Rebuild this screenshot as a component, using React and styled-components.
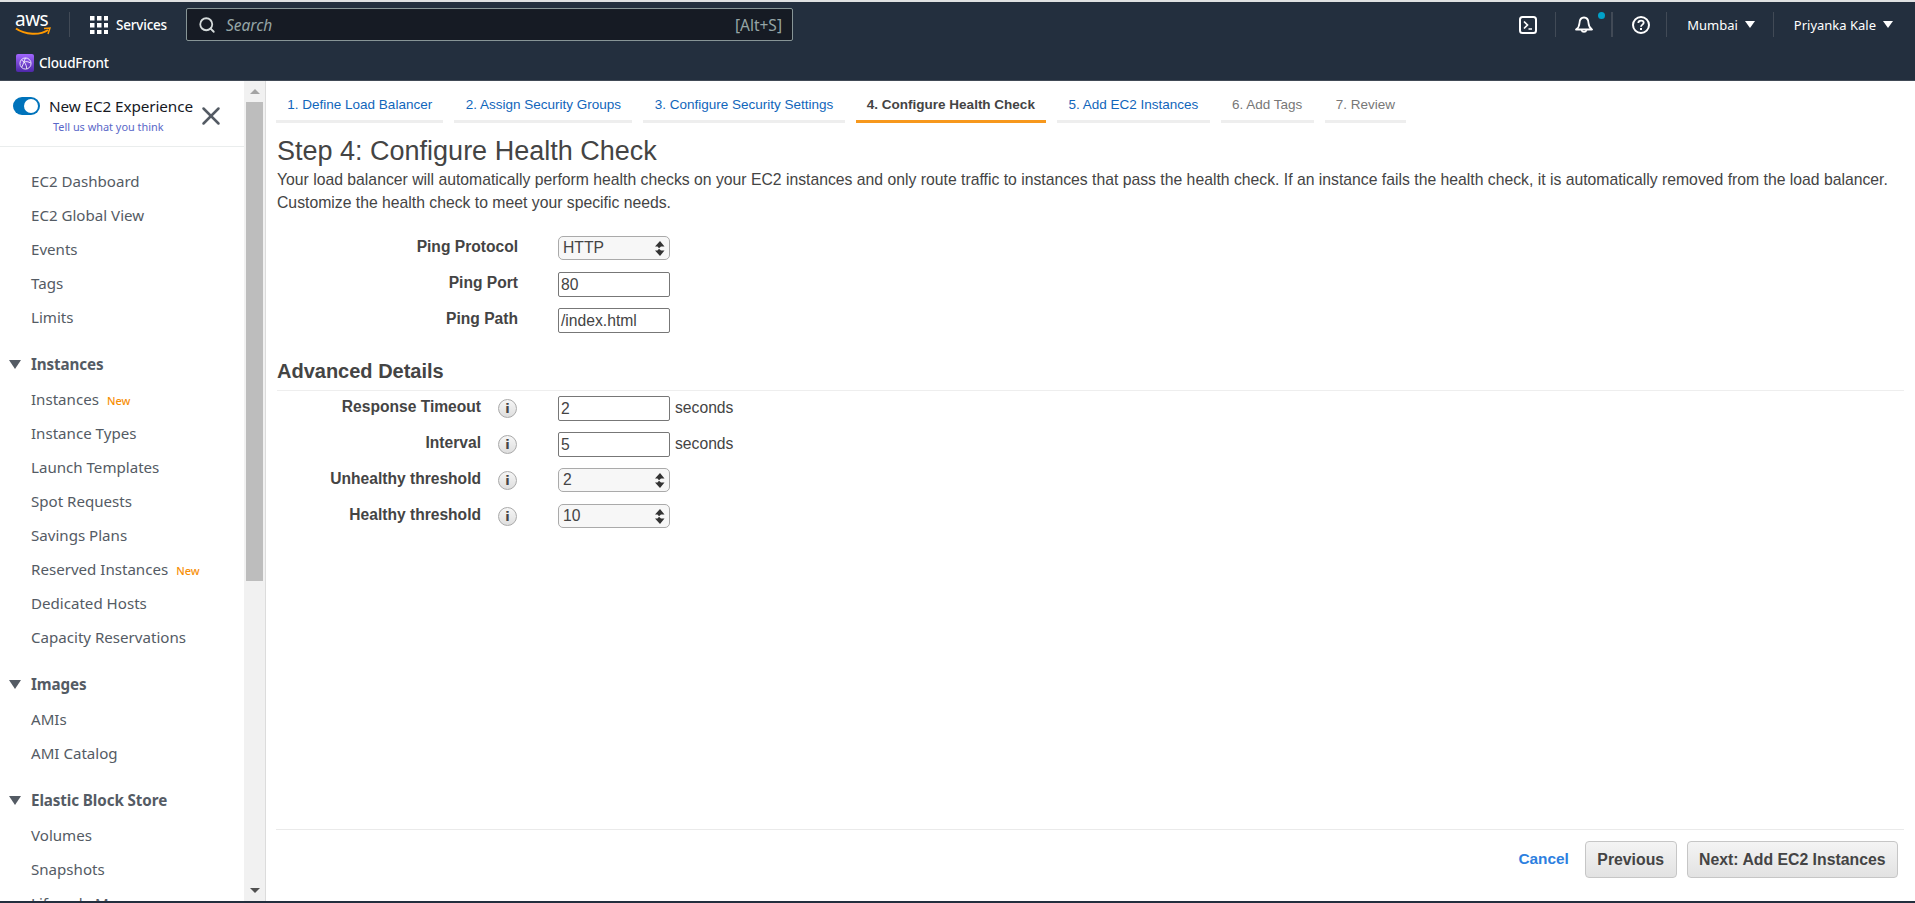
import styled, { createGlobalStyle } from "styled-components";
import { X, Search } from "lucide-react";

const GlobalStyle = createGlobalStyle`
  html, body {
    margin: 0;
    padding: 0;
    height: 100%;
    overflow: hidden;
    background: #fff;
  }
  * { box-sizing: border-box; }
`;

const Page = styled.div`
  height: 903px;
  display: flex;
  flex-direction: column;
  border-top: 2px solid #dfe1e2;
  border-bottom: 2px solid #232f3e;
  font-family: "Liberation Sans", Arial, sans-serif;
`;

/* top bar */
const Header = styled.header`
  flex: none;
  height: 79px;
  background: #232f3e;
  color: #fff;
  font-family: "Noto Sans", sans-serif;
  font-size: 14px;
  border-bottom: 1px solid #414a56;
`;

const TopRow = styled.div`
  height: 45px;
  display: flex;
  align-items: center;
  padding-left: 15px;
`;

const Logo = styled.div`
  width: 36px;
  height: 30px;
  position: relative;
  font-size: 19px;
  line-height: 19px;
  letter-spacing: -0.5px;
  margin-right: 18px;
  svg {
    position: absolute;
    left: 0;
    top: 17px;
  }
`;

const VDivider = styled.div`
  width: 1px;
  height: 25px;
  background: #414a56;
  margin-right: 20px;
`;

const Services = styled.div`
  display: flex;
  align-items: center;
  gap: 8px;
  font-weight: 500;
  font-size: 13.5px;
  letter-spacing: -0.2px;
  margin-right: 19px;
`;

const SearchBox = styled.div`
  width: 607px;
  height: 33px;
  background: #161b24;
  border: 1px solid #879596;
  border-radius: 2px;
  display: flex;
  align-items: center;
  padding: 0 10px 0 11px;
  gap: 10px;
  font-size: 15.5px;
  color: #95a5a6;
  svg { color: #d5dbdb; }
`;

const SearchHint = styled.span`
  font-style: italic;
  flex: 1;
`;

const TopRight = styled.div`
  margin-left: auto;
  display: flex;
  align-items: center;
`;

const NavCell = styled.div`
  height: 25px;
  display: flex;
  align-items: center;
  gap: 7px;
  position: relative;
  padding: ${(p) => p.$pad};
  border-left: ${(p) => (p.$first ? "none" : `${p.$thick ? 2 : 1}px solid #414a56`)};
  font-size: 13px;
`;

const NotifyDot = styled.span`
  position: absolute;
  width: 7px;
  height: 7px;
  border-radius: 50%;
  background: #00a1c9;
  top: 0;
  right: 6px;
`;

const Caret = styled.span`
  width: 0;
  height: 0;
  border-left: 5px solid transparent;
  border-right: 5px solid transparent;
  border-top: 7px solid #fff;
`;

const SubRow = styled.div`
  height: 33px;
  display: flex;
  align-items: center;
  padding: 0 0 1px 16px;
  gap: 5px;
  font-size: 13.5px;
  letter-spacing: -0.2px;
  font-weight: 500;
`;

const ServiceBadge = styled.span`
  width: 18px;
  height: 18px;
  border-radius: 2px;
  background: linear-gradient(0deg, #4d27a8, #a166ff);
  display: flex;
  align-items: center;
  justify-content: center;
`;

/* body */
const Body = styled.div`
  flex: 1;
  min-height: 0;
  display: flex;
`;

const Sidebar = styled.aside`
  flex: none;
  width: 244px;
  display: flex;
  flex-direction: column;
  font-family: "Noto Sans", sans-serif;
  overflow: hidden;
`;

const SideHead = styled.div`
  flex: none;
  height: 66px;
  border-bottom: 1px solid #eaeded;
  display: flex;
  padding: 16px 0 0 13px;
  position: relative;
`;

const Toggle = styled.span`
  width: 27px;
  height: 18px;
  border-radius: 9px;
  background: #0073bb;
  position: relative;
  margin-right: 9px;
  &::after {
    content: "";
    position: absolute;
    right: 2px;
    top: 2px;
    width: 14px;
    height: 14px;
    border-radius: 50%;
    background: #fff;
  }
`;

const ExpTitle = styled.div`
  font-size: 15.3px;
  line-height: 19px;
  color: #16191f;
  letter-spacing: -0.1px;
  white-space: nowrap;
`;

const ExpLink = styled.div`
  font-size: 10.9px;
  line-height: 14px;
  color: #5a67c8;
  margin-top: 4px;
  padding-left: 4px;
`;

const CloseBtn = styled.span`
  position: absolute;
  left: 196px;
  top: 20px;
  color: #545b64;
  display: flex;
`;

const Nav = styled.nav`
  padding-top: 17px;
`;

const NavItem = styled.div`
  height: 34px;
  display: flex;
  align-items: center;
  padding-left: 31px;
  font-size: 15.1px;
  color: #545b64;
  white-space: nowrap;
`;

const NewTag = styled.span`
  color: #f79008;
  font-size: 11px;
  font-weight: 500;
  margin-left: 8px;
  padding-top: 2px;
`;

const SectionHead = styled.div`
  height: 36px;
  margin-top: 12px;
  display: flex;
  align-items: center;
  padding-left: 9px;
  gap: 10px;
  font-size: 15.2px;
  font-weight: 700;
  color: #545b64;
  letter-spacing: -0.1px;
`;

const SectionCaret = styled.span`
  width: 0;
  height: 0;
  border-left: 6px solid transparent;
  border-right: 6px solid transparent;
  border-top: 9px solid #545b64;
`;

/* fake scrollbar as in the shot */
const ScrollTrack = styled.div`
  flex: none;
  width: 22px;
  background: #f1f1f1;
  border-right: 1px solid #dcdcdc;
  padding-right: 2px;
  display: flex;
  flex-direction: column;
  align-items: flex-end;
`;

const ScrollBtn = styled.div`
  width: 17px;
  height: 21px;
  display: flex;
  align-items: center;
  justify-content: center;
  &::after {
    content: "";
    border-left: 5px solid transparent;
    border-right: 5px solid transparent;
    ${(p) => (p.$down ? "border-top: 5px solid #505050;" : "border-bottom: 5px solid #a3a3a3;")}
  }
`;

const ScrollThumb = styled.div`
  width: 17px;
  height: 479px;
  background: #bdbdbd;
`;

const ScrollSpace = styled.div`
  flex: 1;
`;

const Main = styled.main`
  flex: 1;
  min-width: 0;
  display: flex;
  flex-direction: column;
  padding: 0 11px 0 10px;
  color: #444;
  font-size: 14px;
`;

const Tabs = styled.div`
  flex: none;
  display: flex;
  gap: 11px;
  height: 42px;
`;

const Tab = styled.div`
  padding: 7px 11.3px 0;
  display: flex;
  align-items: center;
  font-size: 13.5px;
  color: ${(p) => (p.$active ? "#444" : p.$off ? "#777" : "#1166bb")};
  font-weight: ${(p) => (p.$active ? 700 : 400)};
  border-bottom: 3px solid ${(p) => (p.$active ? "#f7981d" : "#eee")};
  white-space: nowrap;
`;

const Title = styled.h1`
  margin: 13px 0 0 1px;
  font-size: 27px;
  line-height: 30px;
  font-weight: 400;
  color: #444;
`;

const Intro = styled.p`
  margin: 2px 0 0 1px;
  font-size: 15.76px;
  line-height: 23px;
  color: #444;
`;

const FieldRow = styled.div`
  height: 36px;
  display: flex;
  align-items: center;
`;

const FieldLabel = styled.label`
  width: ${(p) => (p.$short ? 205 : 242)}px;
  flex: none;
  text-align: right;
  font-weight: 700;
  font-size: 15.6px;
  margin-right: ${(p) => (p.$short ? 0 : 40)}px;
  padding-bottom: 2px;
`;

const InfoIcon = styled.span`
  width: 19px;
  height: 19px;
  margin: 0 41px 0 17px;
  border-radius: 50%;
  background: linear-gradient(#f6f6f6, #dedede);
  border: 1px solid #aaa;
  color: #444;
  font-size: 13px;
  font-weight: 700;
  font-family: "DejaVu Sans", sans-serif;
  display: flex;
  align-items: center;
  justify-content: center;
`;

const TextBox = styled.div`
  width: 112px;
  height: 25px;
  border: 1px solid #777;
  border-radius: 2px;
  padding-left: 2px;
  font-size: 15.7px;
  line-height: 23px;
  color: #444;
  background: #fff;
`;

const SelectBox = styled.div`
  width: 112px;
  height: 24px;
  border: 1px solid #aaa;
  border-radius: 5px;
  padding: 0 4px 0 4px;
  font-size: 15.7px;
  color: #444;
  background: #f7f7f7;
  display: flex;
  align-items: center;
  justify-content: space-between;
`;

const Unit = styled.span`
  margin-left: 5px;
  font-size: 15.7px;
`;

const Fields = styled.div`
  margin-top: ${(p) => p.$top}px;
`;

const SubHeading = styled.h2`
  margin: 20px 0 0 1px;
  padding-bottom: 6px;
  font-size: 20px;
  line-height: 26px;
  font-weight: 700;
  color: #444;
  border-bottom: 1px solid #eee;
`;

const Footer = styled.div`
  margin-top: auto;
  flex: none;
  height: 72px;
  border-top: 1px solid #eaeaea;
  display: flex;
  align-items: flex-start;
  justify-content: flex-end;
  padding: 11px 6px 0 0;
`;

const CancelLink = styled.a`
  color: #2d7fe0;
  font-weight: 700;
  font-size: 15.4px;
  line-height: 36px;
  margin-right: 16px;
`;

const Button = styled.button`
  height: 37px;
  padding: 0 11.5px;
  margin-left: ${(p) => (p.$next ? 10 : 0)}px;
  border: 1px solid #c6c6c6;
  border-radius: 4px;
  background: linear-gradient(#f4f4f4, #e2e2e2);
  color: #444;
  font-family: inherit;
  font-size: 15.8px;
  font-weight: 700;
`;

const SelectArrows = () => (
  <svg width="11" height="15" viewBox="0 0 11 15">
    <path d="M6 0 L10.5 5.5 H7 L5 7.3 L3.5 5.5 H1Z" fill="#333" />
    <path d="M6 15 L10.5 9.5 H7 L5 7.7 L3.5 9.5 H1Z" fill="#333" />
  </svg>
);

const GridIcon = () => (
  <svg width="18" height="18" viewBox="0 0 18 18" fill="#fff">
    {[0, 7, 14].map((y) =>
      [0, 7, 14].map((x) => <rect key={`${x}-${y}`} x={x} y={y} width="4.5" height="4.5" />)
    )}
  </svg>
);

const TerminalIcon = () => (
  <svg width="18" height="18" viewBox="0 0 18 18" fill="none" stroke="#fff" strokeWidth="2">
    <rect x="1" y="1" width="16" height="16" rx="2.5" />
    <path d="M5 5.5 L8.5 9 L5 12.5 M9.5 13 H13" strokeWidth="1.7" />
  </svg>
);

const BellIcon = () => (
  <svg width="18" height="18" viewBox="0 0 18 18" fill="none" stroke="#fff" strokeWidth="1.8">
    <path d="M1 13.5 C3.5 12 4.3 10 4.5 7 C4.7 3.5 6.5 1.5 9 1.5 C11.5 1.5 13.3 3.5 13.5 7 C13.7 10 14.5 12 17 13.5Z" strokeLinejoin="round" />
    <path d="M6.5 14 A2.6 2.6 0 0 0 11.5 14" />
  </svg>
);

const HelpIcon = () => (
  <svg width="18" height="18" viewBox="0 0 18 18" fill="none" stroke="#fff" strokeWidth="2">
    <circle cx="9" cy="9" r="8" />
    <path d="M6.3 7 C6.4 5.2 7.6 4.6 9 4.6 C10.6 4.6 11.7 5.5 11.7 6.8 C11.7 8.6 9 8.7 9 10.8" strokeWidth="1.8" />
    <rect x="8" y="12" width="2" height="2" fill="#fff" stroke="none" />
  </svg>
);

const CloudFrontIcon = () => (
  <svg width="13" height="13" viewBox="0 0 14 14" fill="none" stroke="#fff" strokeWidth="0.9">
    <circle cx="7" cy="7" r="6" />
    <path d="M3 3.5 C6 5 8 8 8.5 13 M7 1 C5.5 4 5 7 3 11 M5.5 5.5 C8 4.5 10 5 12.5 6.5" />
  </svg>
);

const topItems = ["EC2 Dashboard", "EC2 Global View", "Events", "Tags", "Limits"];

const navSections = [
  {
    title: "Instances",
    items: [
      { name: "Instances", isNew: true },
      { name: "Instance Types" },
      { name: "Launch Templates" },
      { name: "Spot Requests" },
      { name: "Savings Plans" },
      { name: "Reserved Instances", isNew: true },
      { name: "Dedicated Hosts" },
      { name: "Capacity Reservations" },
    ],
  },
  { title: "Images", items: [{ name: "AMIs" }, { name: "AMI Catalog" }] },
  {
    title: "Elastic Block Store",
    items: [{ name: "Volumes" }, { name: "Snapshots" }, { name: "Lifecycle Manager" }],
  },
];

const steps = [
  { label: "1. Define Load Balancer" },
  { label: "2. Assign Security Groups" },
  { label: "3. Configure Security Settings" },
  { label: "4. Configure Health Check", active: true },
  { label: "5. Add EC2 Instances" },
  { label: "6. Add Tags", off: true },
  { label: "7. Review", off: true },
];

const App = () => {
  return (
    <Page>
      <GlobalStyle />
      <Header>
        <TopRow>
          <Logo>
            aws
            <svg width="36" height="10" viewBox="0 0 36 10" fill="none">
              <path d="M1 1.5 C10 8 25 8.5 33 3" stroke="#f90" strokeWidth="2" />
              <path d="M29 1.5 L35 1 L33 7" stroke="#f90" strokeWidth="1.5" />
            </svg>
          </Logo>
          <VDivider />
          <Services>
            <GridIcon />
            Services
          </Services>
          <SearchBox>
            <Search size={18} strokeWidth={2.4} />
            <SearchHint>Search</SearchHint>
            <span>[Alt+S]</span>
          </SearchBox>
          <TopRight>
            <NavCell $first $pad="0 18px 0 0">
              <TerminalIcon />
            </NavCell>
            <NavCell $pad="0 18px 0 19px">
              <BellIcon />
              <NotifyDot />
            </NavCell>
            <NavCell $thick $pad="0 16px 0 19px">
              <HelpIcon />
            </NavCell>
            <NavCell $pad="0 18px 0 20px">
              Mumbai <Caret />
            </NavCell>
            <NavCell $pad="0 22px 0 20px">
              Priyanka Kale <Caret />
            </NavCell>
          </TopRight>
        </TopRow>
        <SubRow>
          <ServiceBadge>
            <CloudFrontIcon />
          </ServiceBadge>
          CloudFront
        </SubRow>
      </Header>
      <Body>
        <Sidebar>
          <SideHead>
            <Toggle />
            <div>
              <ExpTitle>New EC2 Experience</ExpTitle>
              <ExpLink>Tell us what you think</ExpLink>
            </div>
            <CloseBtn>
              <X size={30} strokeWidth={2} />
            </CloseBtn>
          </SideHead>
          <Nav>
            {topItems.map((name) => (
              <NavItem key={name}>{name}</NavItem>
            ))}
            {navSections.map((section) => (
              <div key={section.title}>
                <SectionHead>
                  <SectionCaret />
                  {section.title}
                </SectionHead>
                {section.items.map((item) => (
                  <NavItem key={item.name}>
                    {item.name}
                    {item.isNew && <NewTag>New</NewTag>}
                  </NavItem>
                ))}
              </div>
            ))}
          </Nav>
        </Sidebar>
        <ScrollTrack>
          <ScrollBtn />
          <ScrollThumb />
          <ScrollSpace />
          <ScrollBtn $down />
        </ScrollTrack>
        <Main>
          <Tabs>
            {steps.map((s) => (
              <Tab key={s.label} $active={s.active} $off={s.off}>
                {s.label}
              </Tab>
            ))}
          </Tabs>
          <Title>Step 4: Configure Health Check</Title>
          <Intro>
            Your load balancer will automatically perform health checks on your EC2 instances and only route traffic to instances that pass the health check. If an instance fails the health check, it is automatically removed from the load balancer. Customize the health check to meet your specific needs.
          </Intro>
          <Fields $top={16}>
            <FieldRow>
              <FieldLabel>Ping Protocol</FieldLabel>
              <SelectBox>
                HTTP <SelectArrows />
              </SelectBox>
            </FieldRow>
            <FieldRow>
              <FieldLabel>Ping Port</FieldLabel>
              <TextBox>80</TextBox>
            </FieldRow>
            <FieldRow>
              <FieldLabel>Ping Path</FieldLabel>
              <TextBox>/index.html</TextBox>
            </FieldRow>
          </Fields>
          <SubHeading>Advanced Details</SubHeading>
          <Fields $top={-1}>
            <FieldRow>
              <FieldLabel $short>Response Timeout</FieldLabel>
              <InfoIcon>i</InfoIcon>
              <TextBox>2</TextBox>
              <Unit>seconds</Unit>
            </FieldRow>
            <FieldRow>
              <FieldLabel $short>Interval</FieldLabel>
              <InfoIcon>i</InfoIcon>
              <TextBox>5</TextBox>
              <Unit>seconds</Unit>
            </FieldRow>
            <FieldRow>
              <FieldLabel $short>Unhealthy threshold</FieldLabel>
              <InfoIcon>i</InfoIcon>
              <SelectBox>
                2 <SelectArrows />
              </SelectBox>
            </FieldRow>
            <FieldRow>
              <FieldLabel $short>Healthy threshold</FieldLabel>
              <InfoIcon>i</InfoIcon>
              <SelectBox>
                10 <SelectArrows />
              </SelectBox>
            </FieldRow>
          </Fields>
          <Footer>
            <CancelLink>Cancel</CancelLink>
            <Button>Previous</Button>
            <Button $next>Next: Add EC2 Instances</Button>
          </Footer>
        </Main>
      </Body>
    </Page>
  );
};

export default App;
